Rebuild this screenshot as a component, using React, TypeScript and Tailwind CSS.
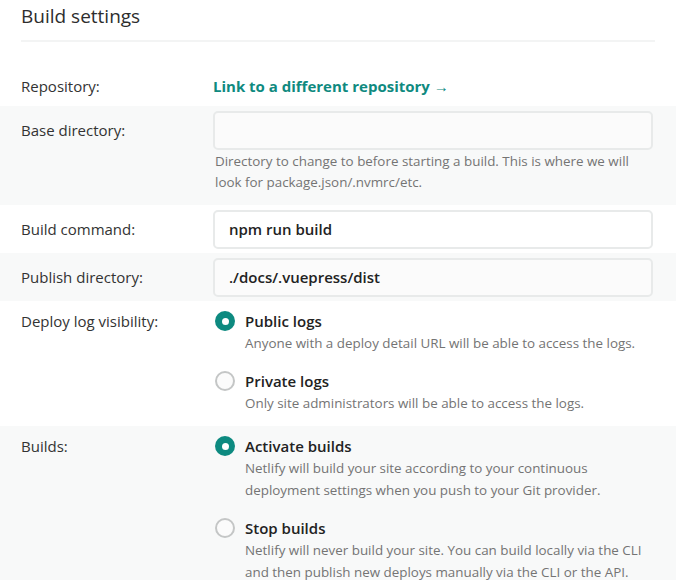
import React from "react";

const font = { fontFamily: '"Open Sans", "Noto Sans", sans-serif' };

function Radio({ checked }: { checked: boolean }) {
  return checked ? (
    <span className="ml-[2px] mt-px flex h-[20px] w-[20px] shrink-0 items-center justify-center rounded-full bg-[#0d8a80]">
      <span className="h-[7px] w-[7px] rounded-full bg-white" />
    </span>
  ) : (
    <span className="ml-[2px] mt-px h-[20px] w-[20px] shrink-0 rounded-full border-2 border-[#c4c6c6] bg-[#fbfbfb]" />
  );
}

function Option({ checked, title, desc }: { checked: boolean; title: string; desc: React.ReactNode }) {
  return (
    <div className="flex gap-[10px]">
      <Radio checked={checked} />
      <div>
        <div className="text-[15px] font-semibold leading-[22px] text-[#222]">{title}</div>
        <div className="text-[13.4px] leading-[22px] text-[#747474]">{desc}</div>
      </div>
    </div>
  );
}

export default function App() {
  return (
    <div className="w-[676px] bg-white text-[#333]" style={font}>
      <div className="px-[21px] pt-[3px]">
        <h2 className="text-[19px] leading-[26px] text-[#2d2d2d]">Build settings</h2>
        <div className="mt-[11px] h-[2px] bg-[#f3f4f4]" />
      </div>

      <div className="mt-[24px] flex h-[40px] items-center px-[21px]">
        <div className="w-[192px] text-[15px]">Repository:</div>
        <div className="text-[15px] font-bold text-[#0f8a7f]">Link to a different repository →</div>
      </div>

      <div className="flex bg-[#f8f9f9] px-[21px] pt-[5px] pb-[12px]">
        <div className="flex h-[39px] w-[192px] items-center text-[15px]">Base directory:</div>
        <div className="w-[440px]">
          <div className="h-[39px] rounded-[5px] border-2 border-[#e8eaea] bg-[#fbfbfb]" />
          <div className="mt-[1px] pl-[2px] text-[13.4px] leading-[21px] text-[#747474]">
            Directory to change to before starting a build. This is where we will
            <br />
            look for package.json/.nvmrc/etc.
          </div>
        </div>
      </div>

      <div className="flex h-[48px] items-center px-[21px]">
        <div className="w-[192px] text-[15px]">Build command:</div>
        <div className="flex h-[39px] w-[440px] items-center rounded-[5px] border-2 border-[#e8eaea] bg-white px-[14px] text-[15px] font-semibold text-[#222]">
          npm run build
        </div>
      </div>

      <div className="flex h-[48px] items-center bg-[#f8f9f9] px-[21px]">
        <div className="w-[192px] text-[15px]">Publish directory:</div>
        <div className="flex h-[39px] w-[440px] items-center rounded-[5px] border-2 border-[#e8eaea] bg-[#fbfbfb] px-[14px] text-[15px] font-semibold text-[#222]">
          ./docs/.vuepress/dist
        </div>
      </div>

      <div className="flex px-[21px] pt-[9px] pb-[12px]">
        <div className="w-[192px] text-[15px] leading-[22px]">Deploy log visibility:</div>
        <div className="flex w-[440px] flex-col gap-[16px]">
          <Option checked title="Public logs" desc="Anyone with a deploy detail URL will be able to access the logs." />
          <Option checked={false} title="Private logs" desc="Only site administrators will be able to access the logs." />
        </div>
      </div>

      <div className="flex bg-[#f8f9f9] px-[21px] pt-[9px] pb-[20px]">
        <div className="w-[192px] text-[15px] leading-[22px]">Builds:</div>
        <div className="flex w-[440px] flex-col gap-[16px]">
          <Option
            checked
            title="Activate builds"
            desc={<>Netlify will build your site according to your continuous<br />deployment settings when you push to your Git provider.</>}
          />
          <Option
            checked={false}
            title="Stop builds"
            desc={<>Netlify will never build your site. You can build locally via the CLI<br />and then publish new deploys manually via the CLI or the API.</>}
          />
        </div>
      </div>
    </div>
  );
}
